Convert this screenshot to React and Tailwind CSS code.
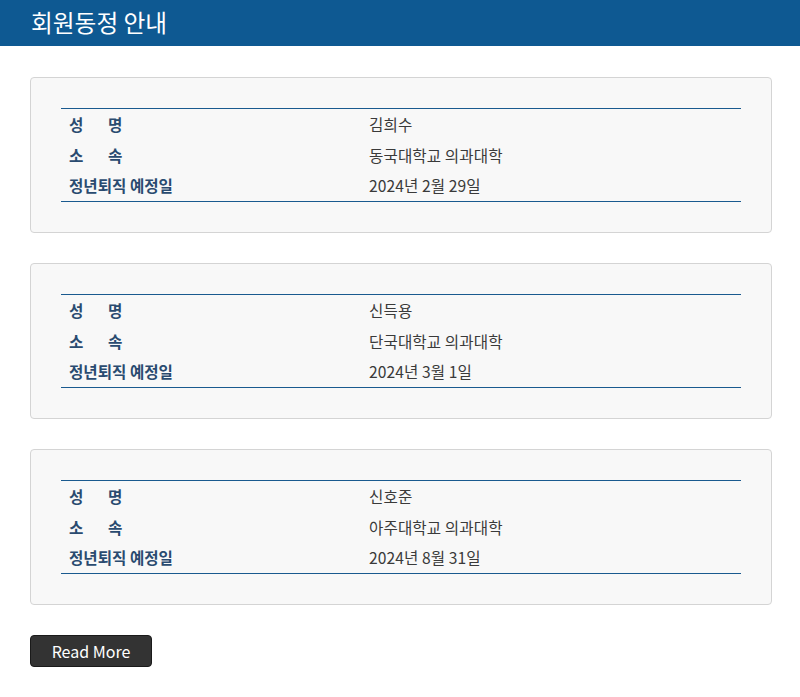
import React from "react";

const members = [
  { name: "김희수", org: "동국대학교 의과대학", date: "2024년 2월 29일" },
  { name: "신득용", org: "단국대학교 의과대학", date: "2024년 3월 1일" },
  { name: "신호준", org: "아주대학교 의과대학", date: "2024년 8월 31일" },
];

function Row({ label, value, h }) {
  return (
    <div className={`flex items-center ${h}`}>
      <div className="w-[308px] pl-2 font-semibold text-[#2a4b70] whitespace-pre">{label}</div>
      <div className="flex-1 text-[#3a3a3a] tracking-[0.1px]">{value}</div>
    </div>
  );
}

export default function App() {
  return (
    <div
      className="w-[800px] min-h-[697px] bg-white text-[15.6px]"
      style={{ fontFamily: '"Noto Sans CJK KR", "Noto Sans", sans-serif' }}
    >
      <div className="h-[46px] bg-[#0e5992] flex items-center pl-[31px]">
        <h1 className="text-white text-[23.7px] font-normal leading-none">회원동정 안내</h1>
      </div>
      <div className="pl-[30px] pt-[31px] pb-[30px] flex flex-col gap-[30px]">
        {members.map((m) => (
          <div
            key={m.name}
            className="w-[742px] border border-[#d4d4d4] rounded-[4px] bg-[#f8f8f8] px-[30px] py-[30px]"
          >
            <div className="border-t border-b border-[#1a5a8f]">
              <Row label={"성       명"} value={m.name} h="h-[31px]" />
              <Row label={"소       속"} value={m.org} h="h-[31px]" />
              <Row label="정년퇴직 예정일" value={m.date} h="h-[30px]" />
            </div>
          </div>
        ))}
        <div>
          <button className="w-[122px] h-[32px] bg-[#333333] border border-[#1a1a1a] rounded-[4px] text-white text-[16px] leading-none">
            Read More
          </button>
        </div>
      </div>
    </div>
  );
}
